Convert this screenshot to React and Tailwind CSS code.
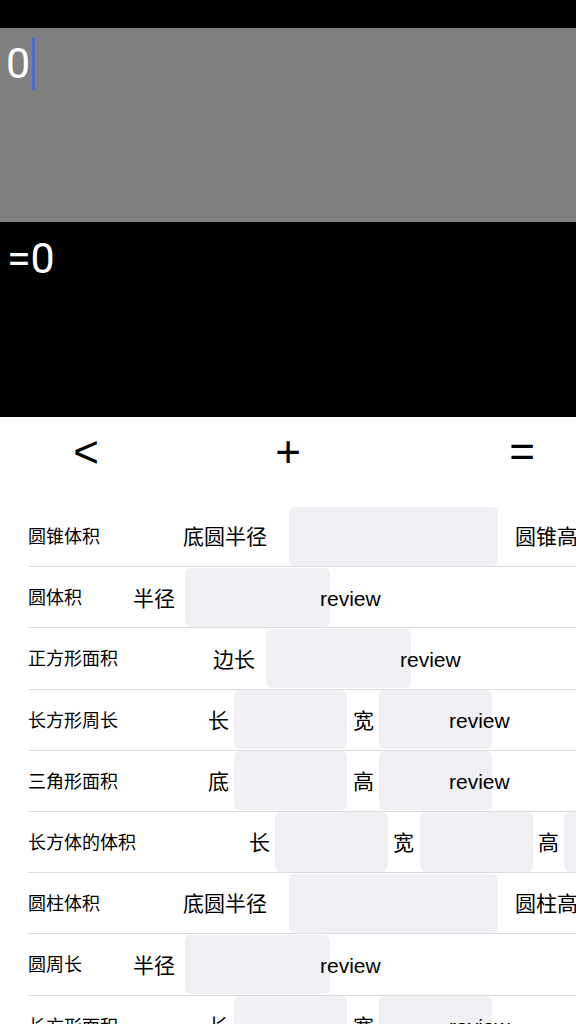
import React from 'react';

const FONT = { fontFamily: '"Liberation Sans", "Noto Sans CJK SC", sans-serif' };
const DIGITS = { fontFamily: 'Roboto, "Liberation Sans", sans-serif' };

const Box = ({ className = '' }) => (
    <div className={`shrink-0 self-stretch my-[0.5px] rounded-[6px] bg-[#efeff4] ${className}`}></div>
);

const Row = ({ children }) => (
    <div className="ml-[28px] h-[61.2px] flex items-center border-b border-[#dcdcdf] whitespace-nowrap">
        {children}
    </div>
);

const Title = ({ w, children }) => (
    <span className={`shrink-0 pt-[3px] text-[18px] text-black ${w}`}>{children}</span>
);

const Txt = ({ className = '', children }) => (
    <span className={`shrink-0 pt-[2px] text-[21px] text-black ${className}`}>{children}</span>
);

// 底圆半径 + 高
const ConeRow = ({ title, high }) => (
    <Row>
        <Title w="w-[155px]">{title}</Title>
        <Txt>底圆半径</Txt>
        <Box className="ml-[22px] w-[209px]" />
        <Txt className="ml-[17px]">{high}</Txt>
    </Row>
);

const RadiusRow = ({ title }) => (
    <Row>
        <Title w="w-[105px]">{title}</Title>
        <Txt>半径</Txt>
        <Box className="ml-[10px] w-[145px]" />
        <Txt className="relative ml-[-10px]">review</Txt>
    </Row>
);

const TwoRow = ({ title, a, b }) => (
    <Row>
        <Title w="w-[180px]">{title}</Title>
        <Txt>{a}</Txt>
        <Box className="ml-[5px] w-[113px]" />
        <Txt className="ml-[6px]">{b}</Txt>
        <Box className="ml-[5px] w-[113px]" />
        <Txt className="relative ml-[-43px]">review</Txt>
    </Row>
);

const App = () => {
    return (
        <div className="w-[576px] h-[1024px] overflow-hidden bg-white" style={FONT}>
            <div className="h-[28px] bg-black"></div>

            {/* input */}
            <div className="h-[194px] bg-[#808080] flex items-start pl-[6px] pt-[9px]">
                <span className="mt-[5px] text-[43px] leading-none text-white" style={DIGITS}>0</span>
                <span className="ml-[2px] w-[2.5px] h-[53px] bg-[#4a6cd8] rounded-full"></span>
            </div>

            {/* result */}
            <div className="h-[195px] bg-black pl-[7px] pt-[15px]">
                <span className="text-[43px] leading-none text-white" style={DIGITS}>=0</span>
            </div>

            {/* buttons */}
            <div className="h-[89px] flex items-start pt-[13px] pl-[64px] text-[44px] leading-none text-black">
                <span className="w-[44px] text-center">&lt;</span>
                <span className="ml-[158px] w-[44px] text-center">+</span>
                <span className="ml-[190px] w-[44px] text-center">=</span>
            </div>

            <ConeRow title="圆锥体积" high="圆锥高" />
            <RadiusRow title="圆体积" />
            <Row>
                <Title w="w-[185px]">正方形面积</Title>
                <Txt>边长</Txt>
                <Box className="ml-[11px] w-[145px]" />
                <Txt className="relative ml-[-11px]">review</Txt>
            </Row>
            <TwoRow title="长方形周长" a="长" b="宽" />
            <TwoRow title="三角形面积" a="底" b="高" />
            <Row>
                <Title w="w-[221px]">长方体的体积</Title>
                <Txt>长</Txt>
                <Box className="ml-[5px] w-[113px]" />
                <Txt className="ml-[5px]">宽</Txt>
                <Box className="ml-[6px] w-[113px]" />
                <Txt className="ml-[5px]">高</Txt>
                <Box className="ml-[5px] w-[113px]" />
            </Row>
            <ConeRow title="圆柱体积" high="圆柱高" />
            <RadiusRow title="圆周长" />
            <TwoRow title="长方形面积" a="长" b="宽" />
        </div>
    );
};

export default App;
